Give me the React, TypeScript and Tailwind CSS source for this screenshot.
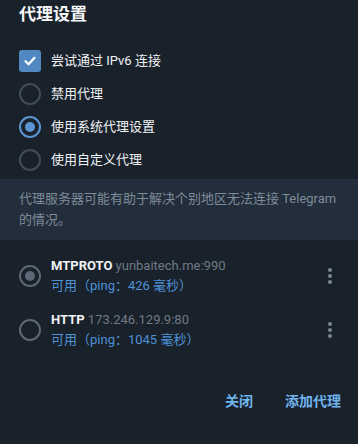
import React from "react";

const font = { fontFamily: 'Roboto, "Noto Sans CJK SC", sans-serif' };

function Radio({ checked, color }: { checked: boolean; color: string }) {
  return (
    <div
      className="w-[22px] h-[22px] rounded-full border-2 flex items-center justify-center shrink-0"
      style={{ borderColor: color }}
    >
      {checked && <div className="w-[10px] h-[10px] rounded-full" style={{ background: color }} />}
    </div>
  );
}

function Option({ label, checked }: { label: string; checked: boolean }) {
  return (
    <div className="h-[33px] flex items-center pl-[19px]">
      <Radio checked={checked} color={checked ? "#5a95d2" : "#414c58"} />
      <span className="ml-[10px] text-[13px] text-[#f1f3f5]">{label}</span>
    </div>
  );
}

function Dots() {
  return (
    <div className="flex flex-col gap-[2px] items-center w-[4px]">
      <div className="w-[4px] h-[4px] rounded-full bg-[#7b8794]" />
      <div className="w-[4px] h-[4px] rounded-full bg-[#7b8794]" />
      <div className="w-[4px] h-[4px] rounded-full bg-[#7b8794]" />
    </div>
  );
}

function Proxy({ type, host, ping, checked }: { type: string; host: string; ping: string; checked: boolean }) {
  return (
    <div className="h-[54px] flex items-center pl-[19px] pr-[26px]">
      <Radio checked={checked} color="#5d6874" />
      <div className="ml-[10px] flex-1 flex flex-col">
        <div className="leading-[20px] text-[13px]">
          <span className="font-bold text-[#f1f3f5]">{type}</span>{" "}
          <span className="text-[#6e7a86]">{host}</span>
        </div>
        <div className="leading-[20px] text-[13px] text-[#4e92d6]">可用（ping：{ping} 毫秒）</div>
      </div>
      <Dots />
    </div>
  );
}

export default function App() {
  return (
    <div className="w-[358px] h-[444px] bg-[#19212b] flex flex-col overflow-hidden" style={font}>
      <div className="h-[28px] leading-[28px] pl-[19px] text-[17px] font-bold text-[#f5f6f7]">代理设置</div>
      <div className="mt-[16px] flex flex-col">
        <div className="h-[33px] flex items-center pl-[19px]">
          <div className="w-[22px] h-[22px] rounded-[3px] bg-[#5288c1] flex items-center justify-center shrink-0">
            <svg width="14" height="14" viewBox="0 0 14 14">
              <path d="M2.5 7.2 L5.6 10.2 L11.5 3.8" fill="none" stroke="#ffffff" strokeWidth="2.2" strokeLinecap="round" strokeLinejoin="round" />
            </svg>
          </div>
          <span className="ml-[10px] text-[13px] text-[#f1f3f5]">尝试通过 IPv6 连接</span>
        </div>
        <Option label="禁用代理" checked={false} />
        <Option label="使用系统代理设置" checked={true} />
        <Option label="使用自定义代理" checked={false} />
      </div>
      <div className="mt-[3px] h-[61px] bg-[#232e3c] pl-[19px] pr-[12px] pt-[9px] text-[13px] leading-[21px] text-[#7e8b98]">
        代理服务器可能有助于解决个别地区无法连接 Telegram 的情况。
      </div>
      <div className="pt-[9px] flex flex-col">
        <Proxy type="MTPROTO" host="yunbaitech.me:990" ping="426" checked={true} />
        <Proxy type="HTTP" host="173.246.129.9:80" ping="1045" checked={false} />
      </div>
      <div className="mt-[33px] flex justify-end items-center h-[22px] pr-[17px] gap-[32px] text-[14px] font-bold text-[#6fb3ec]">
        <span>关闭</span>
        <span>添加代理</span>
      </div>
    </div>
  );
}
